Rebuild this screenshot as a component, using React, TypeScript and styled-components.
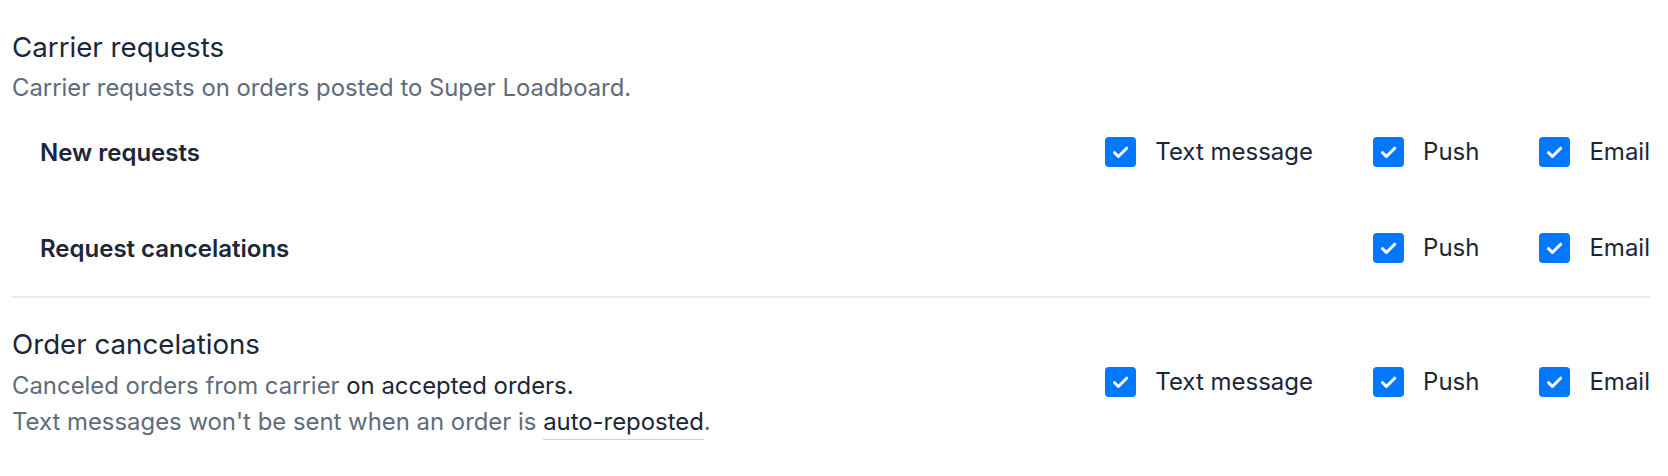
import React from 'react';
import styled, { createGlobalStyle } from 'styled-components';

const GlobalStyle = createGlobalStyle`
  body {
    margin: 0;
    background: #ffffff;
    font-family: Inter, "Noto Sans", "Liberation Sans", sans-serif;
    color: #1b2638;
  }
`;

const Page = styled.div`
  padding: 27px 18px 0 12px;
`;

const Section = styled.section`
  display: flex;
  flex-direction: column;
`;

const Heading = styled.h2`
  margin: 0;
  font-size: 27.7px;
  line-height: 40px;
  font-weight: 400;
  color: #1b2638;
`;

const Subtitle = styled.p`
  margin: 5px 0 0;
  font-size: 23.85px;
  line-height: 32px;
  color: #5f6b7b;
`;

const Row = styled.div`
  display: flex;
  align-items: center;
  justify-content: space-between;
  height: 96px;
  padding-left: 28px;
`;

const RowLabel = styled.div`
  font-size: 24px;
  font-weight: 600;
  color: #1b2638;
`;

const Options = styled.div`
  display: flex;
  align-items: center;
  gap: 60px;
`;

const Option = styled.label`
  display: flex;
  align-items: center;
  gap: 19px;
  font-size: 24px;
  line-height: 30px;
  color: #1b2638;
  cursor: pointer;
`;

const Box = styled.span<{ checked: boolean }>`
  display: inline-flex;
  align-items: center;
  justify-content: center;
  width: 31px;
  height: 30px;
  border-radius: 4px;
  background: ${props => (props.checked ? '#0077ff' : '#ffffff')};
  border: ${props => (props.checked ? 'none' : '2px solid #c4cdd5')};
  box-sizing: border-box;
`;

const Divider = styled.hr`
  margin: 0;
  border: none;
  border-top: 2px solid #e6e9ee;
`;

const OrderRow = styled.div`
  display: flex;
  align-items: center;
  justify-content: space-between;
  padding-top: 26px;
`;

const OrderText = styled.div`
  display: flex;
  flex-direction: column;
`;

const Description = styled.div`
  margin-top: 4px;
  font-size: 23.9px;
  line-height: 36px;
  color: #5f6b7b;
`;

const Strong = styled.span`
  color: #1b2638;
`;

const Underlined = styled.span`
  color: #1b2638;
  border-bottom: 2px solid #c9d0d9;
  padding-bottom: 3px;
`;

const Check = () => (
  <svg width="31" height="30" viewBox="0 0 31 30" fill="none">
    <path d="M9.5 15.6l3.9 3.9 8.3-8.3" stroke="#fff" strokeWidth="3" strokeLinecap="round" strokeLinejoin="round" />
  </svg>
);

const Checkbox: React.FC<{ label: string; checked?: boolean }> = ({ label, checked = true }) => (
  <Option>
    <Box checked={checked}>{checked && <Check />}</Box>
    {label}
  </Option>
);

export default function App() {
  return (
    <>
      <GlobalStyle />
      <Page>
        <Section>
          <Heading>Carrier requests</Heading>
          <Subtitle>Carrier requests on orders posted to Super Loadboard.</Subtitle>
          <Row>
            <RowLabel>New requests</RowLabel>
            <Options>
              <Checkbox label="Text message" />
              <Checkbox label="Push" />
              <Checkbox label="Email" />
            </Options>
          </Row>
          <Row>
            <RowLabel>Request cancelations</RowLabel>
            <Options>
              <Checkbox label="Push" />
              <Checkbox label="Email" />
            </Options>
          </Row>
        </Section>
        <Divider />
        <OrderRow>
          <OrderText>
            <Heading>Order cancelations</Heading>
            <Description>
              Canceled orders from carrier <Strong>on accepted orders.</Strong>
              <br />
              Text messages won't be sent when an order is <Underlined>auto-reposted</Underlined>.
            </Description>
          </OrderText>
          <Options>
            <Checkbox label="Text message" />
            <Checkbox label="Push" />
            <Checkbox label="Email" />
          </Options>
        </OrderRow>
      </Page>
    </>
  );
}
